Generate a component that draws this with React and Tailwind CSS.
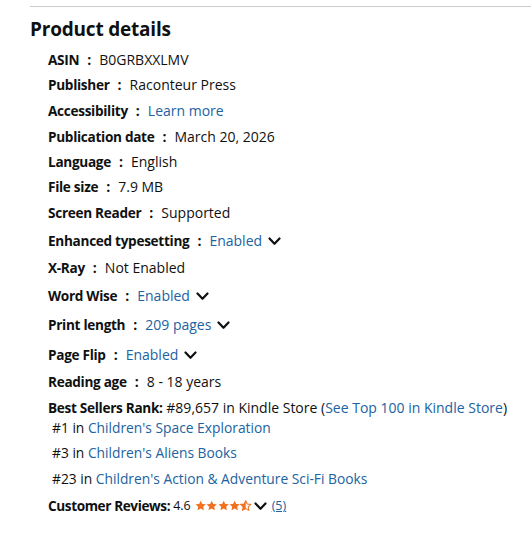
import React from 'react';

const LINK = 'text-[#2162a1]';
const STAR = 'M12 1.2l3.3 6.9 7.5.9-5.5 5.1 1.5 7.5L12 17.9l-6.8 3.7 1.5-7.5L1.2 9l7.5-.9z';

const Chevron = ({ className = 'ml-[6px]' }) => (
  <svg className={`inline-block shrink-0 ${className}`} width="13" height="9" viewBox="0 0 13 9" fill="none">
    <path d="M1.5 1.5 L6.5 6.8 L11.5 1.5" stroke="#0f1111" strokeWidth="2.2" strokeLinecap="round" strokeLinejoin="round" />
  </svg>
);

const Star = ({ half = false }) => (
  <svg width="11.4" height="11.6" viewBox="0 0 24 24" className="inline-block">
    {half ? (
      <>
        <defs>
          <clipPath id="halfclip">
            <rect x="0" y="0" width="12" height="24" />
          </clipPath>
        </defs>
        <path d={STAR} fill="none" stroke="#f2701e" strokeWidth="2.2" strokeLinejoin="round" />
        <path clipPath="url(#halfclip)" d={STAR} fill="#f2701e" />
      </>
    ) : (
      <path d={STAR} fill="#f2701e" />
    )}
  </svg>
);

const Row = ({ label, children, chevron = false, className = '' }) => (
  <li className={`h-5 flex items-center ${className}`}>
    <span className="font-bold text-[13.6px] tracking-[-0.3px]">{label}</span>
    <span className="font-bold mx-[8px]">:</span>
    <span>{children}</span>
    {chevron && <Chevron />}
  </li>
);

export default function App() {
  return (
    <div className="w-[531px] h-[538px] bg-white overflow-hidden text-[#0f1111] text-[14px] leading-5 font-['Open_Sans','Liberation_Sans',sans-serif]">
      <div className="pl-[30px] pt-[6px]">
        <div className="h-px bg-[#cccccc]" />
        <h2 className="mt-[9px] text-[19px] leading-[26px] font-bold tracking-[-0.2px]">Product details</h2>
        <ul className="mt-[8px] pl-[18px]">
          <Row label="ASIN">B0GRBXXLMV</Row>
          <Row label="Publisher" className="mt-[5px]">Raconteur Press</Row>
          <Row label="Accessibility" className="mt-[6px]">
            <span className={LINK}>Learn more</span>
          </Row>
          <Row label="Publication date" className="mt-[6px]">March 20, 2026</Row>
          <Row label="Language" className="mt-[5px]">English</Row>
          <Row label="File size" className="mt-[5px]">7.9 MB</Row>
          <Row label="Screen Reader" className="mt-[6px]">Supported</Row>
          <Row label="Enhanced typesetting" chevron className="mt-[8px]">
            <span className={LINK}>Enabled</span>
          </Row>
          <Row label="X-Ray" className="mt-[7px]">Not Enabled</Row>
          <Row label="Word Wise" chevron className="mt-[8px]">
            <span className={LINK}>Enabled</span>
          </Row>
          <Row label="Print length" chevron className="mt-[9px]">
            <span className={LINK}>209 pages</span>
          </Row>
          <Row label="Page Flip" chevron className="mt-[10px]">
            <span className={LINK}>Enabled</span>
          </Row>
          <Row label="Reading age" className="mt-[7px]">8 - 18 years</Row>
          <li className="mt-[6px]">
            <div className="h-5 flex items-center whitespace-nowrap">
              <span className="font-bold text-[13.6px] tracking-[-0.3px]">Best Sellers Rank:</span>
              &nbsp;#89,657 in Kindle Store (<span className={LINK}>See Top 100 in Kindle Store</span>)
            </div>
            <ul className="pl-[4px] text-[13.8px]">
              <li className="h-5 flex items-center">
                #1 in&nbsp;<span className={LINK}>Children's Space Exploration</span>
              </li>
              <li className="h-5 mt-[5px] flex items-center">
                #3 in&nbsp;<span className={LINK}>Children's Aliens Books</span>
              </li>
              <li className="h-5 mt-[6px] flex items-center">
                #23 in&nbsp;<span className={LINK}>Children's Action &amp; Adventure Sci-Fi Books</span>
              </li>
            </ul>
          </li>
          <li className="h-5 mt-[7px] flex items-center">
            <span className="font-bold text-[13.6px] tracking-[-0.4px]">Customer Reviews:</span>
            <span className="ml-[3px] text-[12.5px]">4.6</span>
            <span className="ml-[4px] flex items-center">
              <Star />
              <Star />
              <Star />
              <Star />
              <Star half />
            </span>
            <Chevron className="ml-[2px]" />
            <span className={`ml-[5px] text-[12.5px] underline ${LINK}`}>(5)</span>
          </li>
        </ul>
      </div>
    </div>
  );
}
